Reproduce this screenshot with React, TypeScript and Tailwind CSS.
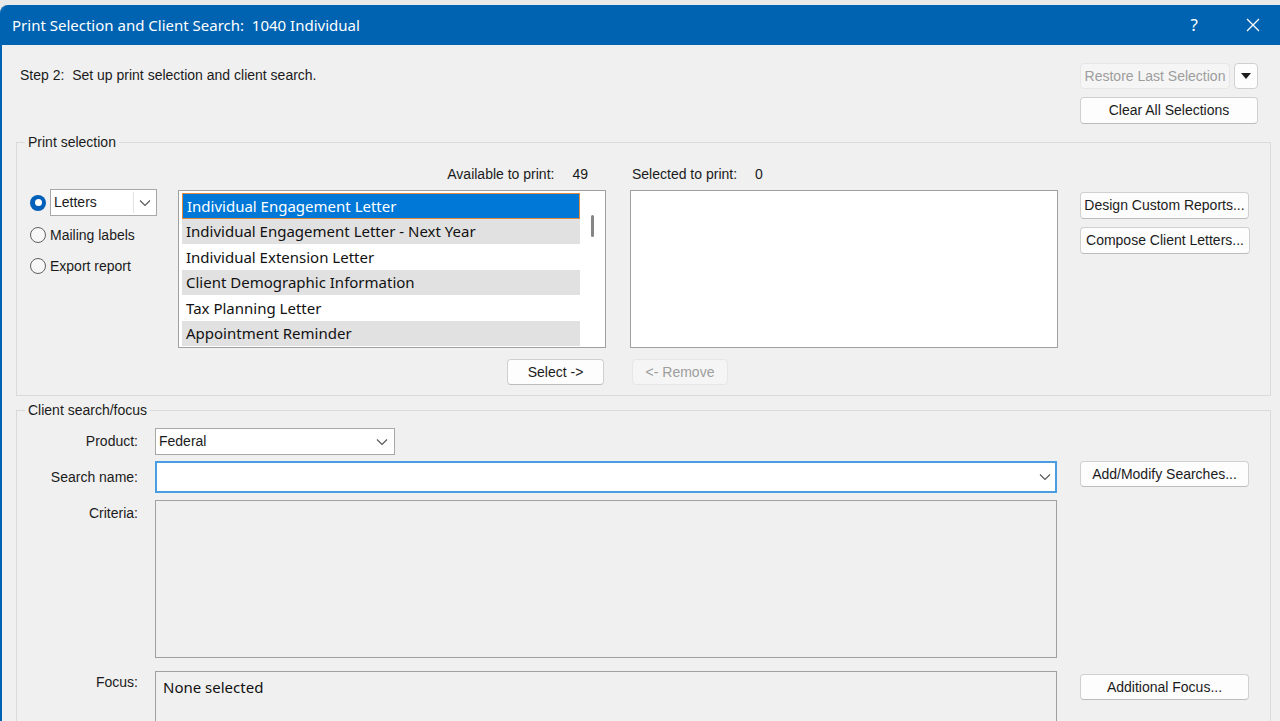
import React from 'react';

const sans = "font-['Liberation_Sans',Arial,sans-serif]";
const segoe = "font-['Noto_Sans',sans-serif]";

const letters = [
  'Individual Engagement Letter',
  'Individual Engagement Letter - Next Year',
  'Individual Extension Letter',
  'Client Demographic Information',
  'Tax Planning Letter',
  'Appointment Reminder',
];

function Chevron({ className = '' }: { className?: string }) {
  return (
    <svg width="12" height="8" viewBox="0 0 12 8" className={className}>
      <path d="M1 1.5 L6 6.5 L11 1.5" fill="none" stroke="#555" strokeWidth="1.1" />
    </svg>
  );
}

function Btn({
  label,
  className = '',
  disabled = false,
}: {
  label: string;
  className?: string;
  disabled?: boolean;
}) {
  return (
    <div
      className={`flex items-center justify-center rounded-[4px] border text-[14px] ${sans} ${
        disabled
          ? 'border-[#e6e6e6] bg-[#f5f5f5] text-[#9d9d9d]'
          : 'border-[#d0d0d0] border-b-[#bcbcbc] bg-[#fdfdfd] text-[#1b1b1b]'
      } ${className}`}
    >
      {label}
    </div>
  );
}

function Radio({ checked, label }: { checked?: boolean; label?: string }) {
  return (
    <div className="flex items-center gap-[4px]">
      {checked ? (
        <span className="flex h-[16px] w-[16px] items-center justify-center rounded-full bg-[#005fb8]">
          <span className="h-[7px] w-[7px] rounded-full bg-white" />
        </span>
      ) : (
        <span className="h-[16px] w-[16px] rounded-full border border-[#5f5f5f] bg-[#f7f7f7]" />
      )}
      {label && <span className={`text-[14px] text-[#1b1b1b] ${sans}`}>{label}</span>}
    </div>
  );
}

function Group({
  title,
  className = '',
  children,
}: {
  title: string;
  className?: string;
  children: React.ReactNode;
}) {
  return (
    <fieldset className={`w-[1255px] border border-[#dadada] ${className}`}>
      <legend className={`ml-[8px] px-[3px] text-[14px] leading-[20px] text-[#1b1b1b] ${sans}`}>
        {title}
      </legend>
      {children}
    </fieldset>
  );
}

export default function App() {
  return (
    <div className="h-[721px] w-[1280px] overflow-hidden bg-[#e9e9e9] pt-[5px]">
      <div className="flex h-[716px] flex-col rounded-tl-[8px] border-l-2 border-[#0063b1] bg-[#f0f0f0]">
        {/* title bar */}
        <div className="flex h-[40px] shrink-0 items-center rounded-tl-[6px] bg-[#0063b1] pl-[10px] text-white">
          <span className={`text-[15px] ${segoe}`}>
            Print Selection and Client Search:&nbsp; 1040 Individual
          </span>
          <span className={`ml-auto mr-[48px] text-[17px] ${segoe}`}>?</span>
          <svg width="14" height="14" viewBox="0 0 14 14" className="mr-[20px]">
            <path d="M1 1 L13 13 M13 1 L1 13" stroke="white" strokeWidth="1.3" />
          </svg>
        </div>

        <div className="pl-[14px] pr-[10px] pt-[18px]">
          {/* top row */}
          <div className="flex items-start">
            <span className={`ml-[4px] text-[14px] leading-[24px] text-[#1b1b1b] ${sans}`}>
              Step 2:&nbsp; Set up print selection and client search.
            </span>
            <div className="ml-auto mr-[12px] flex flex-col gap-[8px]">
              <div className="flex gap-[4px]">
                <Btn label="Restore Last Selection" disabled className="h-[26px] w-[150px]" />
                <div className="flex h-[26px] w-[24px] items-center justify-center rounded-[4px] border border-[#d0d0d0] bg-[#fdfdfd]">
                  <svg width="10" height="6" viewBox="0 0 10 6">
                    <path d="M0 0 H10 L5 6 Z" fill="#1b1b1b" />
                  </svg>
                </div>
              </div>
              <Btn label="Clear All Selections" className="h-[27px] w-[178px]" />
            </div>
          </div>

          {/* print selection */}
          <Group title="Print selection" className="mt-[8px]">
            <div className="flex pb-[10px] pt-[12px]">
              <div className="w-[161px] pl-[13px] pt-[25px]">
                <div className="flex h-[27px] items-center gap-[4px]">
                  <Radio checked />
                  <div className="flex h-[27px] w-[107px] items-center border border-[#a8a8a8] bg-white">
                    <span className={`pl-[3px] text-[14px] text-[#1b1b1b] ${sans}`}>Letters</span>
                    <span className="ml-auto h-[21px] w-px bg-[#e2e2e2]" />
                    <Chevron className="mx-[5px]" />
                  </div>
                </div>
                <div className="mt-[7px] flex h-[24px] items-center">
                  <Radio label="Mailing labels" />
                </div>
                <div className="mt-[7px] flex h-[24px] items-center">
                  <Radio label="Export report" />
                </div>
              </div>

              <div className="w-[428px]">
                <div
                  className={`flex h-[20px] items-center justify-end gap-[18px] pr-[18px] text-[14px] text-[#1b1b1b] ${sans}`}
                >
                  <span>Available to print:</span>
                  <span>49</span>
                </div>
                <div className="mt-[6px] flex h-[158px] border border-[#a0a0a0] bg-white pl-[3px] pt-[2px]">
                  <div className="w-[398px]">
                    {letters.map((l, i) => (
                      <div
                        key={l}
                        className={`flex h-[25.5px] items-center pl-[4px] text-[15px] ${segoe} ${
                          i === 0
                            ? 'border border-[#e58a3c] bg-[#0078d7] pl-[3px] text-white'
                            : i % 2 === 1
                              ? 'bg-[#e1e1e1] text-[#111]'
                              : 'bg-white text-[#111]'
                        }`}
                      >
                        {l}
                      </div>
                    ))}
                  </div>
                  <div className="flex w-[24px] justify-center pt-[22px]">
                    <div className="h-[22px] w-[3px] rounded-full bg-[#858585]" />
                  </div>
                </div>
                <div className="mt-[11px] flex justify-end pr-[2px]">
                  <Btn label="Select ->" className="h-[26px] w-[97px]" />
                </div>
              </div>

              <div className="ml-[24px] w-[428px]">
                <div className={`flex h-[20px] items-center gap-[18px] pl-[2px] text-[14px] text-[#1b1b1b] ${sans}`}>
                  <span>Selected to print:</span>
                  <span>0</span>
                </div>
                <div className="mt-[6px] h-[158px] border border-[#a0a0a0] bg-white" />
                <div className="mt-[11px] pl-[2px]">
                  <Btn label="<- Remove" disabled className="h-[26px] w-[96px]" />
                </div>
              </div>

              <div className="ml-[22px] flex flex-col gap-[8px] pt-[28px]">
                <Btn label="Design Custom Reports..." className="h-[27px] w-[169px]" />
                <Btn label="Compose Client Letters..." className="h-[27px] w-[170px]" />
              </div>
            </div>
          </Group>

          {/* client search */}
          <Group title="Client search/focus" className="mt-[4px] h-[400px]">
            <div className={`grid grid-cols-[121px_902px_auto] gap-x-[17px] pt-[8px] text-[14px] text-[#1b1b1b] ${sans}`}>
              <span className="flex h-[27px] items-center justify-end">Product:</span>
              <div className="flex h-[27px] w-[240px] items-center border border-[#a8a8a8] bg-white">
                <span className="pl-[3px]">Federal</span>
                <Chevron className="ml-auto mr-[6px]" />
              </div>
              <span />

              <span className="mt-[6px] flex h-[32px] items-center justify-end">Search name:</span>
              <div className="mt-[6px] flex h-[32px] items-center border-2 border-[#4a9de2] bg-white">
                <Chevron className="ml-auto mr-[4px]" />
              </div>
              <div className="mt-[6px] pl-[6px]">
                <Btn label="Add/Modify Searches..." className="h-[26px] w-[169px]" />
              </div>

              <span className="mt-[7px] pt-[3px] text-right leading-[20px]">Criteria:</span>
              <div className="mt-[7px] h-[158px] border border-[#a0a0a0] bg-[#f0f0f0]" />
              <span />

              <span className="mt-[13px] pt-[1px] text-right leading-[20px]">Focus:</span>
              <div className={`mt-[13px] h-[120px] border border-[#a0a0a0] bg-[#f0f0f0] pl-[7px] pt-[4px] text-[15px] text-[#111] ${segoe}`}>
                None selected
              </div>
              <div className="mt-[16px] pl-[6px]">
                <Btn label="Additional Focus..." className="h-[26px] w-[169px]" />
              </div>
            </div>
          </Group>
        </div>
      </div>
    </div>
  );
}
